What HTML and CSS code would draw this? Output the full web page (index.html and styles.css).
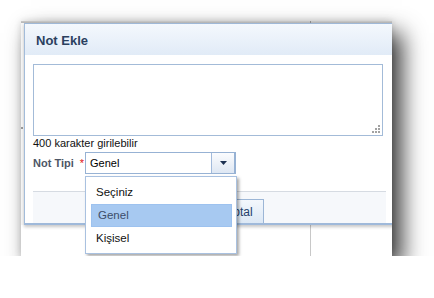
FILE: index.html
```html
<!DOCTYPE html>
<html lang="tr">
<head>
<meta charset="utf-8">
<title>Not Ekle</title>
<link rel="stylesheet" href="styles.css">
</head>
<body>
<div class="shot">
  <div class="topbar"><span class="tick"></span></div>
  <div class="stage">
    <div class="leftstrip"><span class="mark"></span></div>
    <div class="dialog">
      <div class="dlg-head">Not Ekle</div>
      <div class="dlg-body">
        <div class="textarea">
          <svg class="grip" width="8" height="8" viewBox="0 0 8 8"><rect x="6" y="0" width="2" height="2"/><rect x="3" y="3" width="2" height="2"/><rect x="6" y="3" width="2" height="2"/><rect x="0" y="6" width="2" height="2"/><rect x="3" y="6" width="2" height="2"/><rect x="6" y="6" width="2" height="2"/></svg>
        </div>
        <div class="hint">400 karakter girilebilir</div>
        <div class="field">
          <span class="label">Not Tipi</span><span class="req">*</span>
          <div class="select">
            <span class="value">Genel</span>
            <span class="sbtn"><svg width="7" height="4" viewBox="0 0 7 4"><polygon points="0,0 7,0 3.5,4"/></svg></span>
            <ul class="list">
              <li class="item">Seçiniz</li>
              <li class="item item-active">Genel</li>
              <li class="item">Kişisel</li>
            </ul>
          </div>
        </div>
        <div class="footer">
          <button class="button button-save">Kaydet</button>
          <button class="button">İptal</button>
        </div>
      </div>
    </div>
  </div>
  <div class="below"><div class="cell cell-first"></div><div class="cell"></div></div>
</div>
</body>
</html>
```

FILE: styles.css
```css
html, body {
  margin: 0;
  padding: 0;
  background: #ffffff;
}
body {
  font-family: "Liberation Sans", Arial, sans-serif;
  font-size: 11px;
  color: #111;
}
.shot {
  position: relative;
  margin: 21px 0 0 21px;
  width: 371px;
  height: 235px;
  overflow: hidden;
  background: #fff;
  box-shadow: 10px 12px 22px rgba(0, 0, 0, 0.78), 0 0 7px rgba(0, 0, 0, 0.14);
  display: flex;
  flex-direction: column;
}
.topbar {
  position: relative;
  height: 2px;
  background: linear-gradient(#c9c9c9, #b4b4b4);
  flex: none;
}
.tick {
  position: absolute;
  left: 289px;
  top: 0;
  width: 1px;
  height: 2px;
  background: #8a8a8a;
}
.stage {
  display: flex;
  flex: none;
  height: 202px;
}
.leftstrip {
  position: relative;
  width: 3px;
  flex: none;
  background: #f6f6f6;
}
.mark {
  position: absolute;
  left: 0;
  top: 104px;
  width: 2px;
  height: 2px;
  background: #9a9a9a;
}
.dialog {
  position: relative;
  z-index: 2;
  width: 380px;
  flex: none;
  border-top: 1px solid #9fb8d7;
  border-left: 1px solid #a3bcda;
  border-bottom: 2px solid #9fb9da;
  background: #fff;
  box-shadow: 0 2px 3px rgba(0, 0, 0, 0.22);
  display: flex;
  flex-direction: column;
}
.dlg-head {
  height: 28px;
  padding: 3px 0 0 11px;
  line-height: 28px;
  font-size: 13px;
  font-weight: bold;
  color: #2b405f;
  background: linear-gradient(#f4f8fd, #e1ebf7);
}
.dlg-body {
  flex: 1;
  padding: 9px 0 0 8px;
  display: flex;
  flex-direction: column;
}
.textarea {
  position: relative;
  box-sizing: border-box;
  width: 350px;
  height: 72px;
  border: 1px solid #a3bbd8;
  background: #fff;
}
.grip {
  position: absolute;
  right: 2px;
  bottom: 2px;
  fill: #a2a2a2;
}
.hint {
  margin-top: 1px;
  line-height: 13px;
  color: #111;
}
.field {
  margin-top: 2px;
  display: flex;
  align-items: center;
  height: 22px;
}
.label {
  font-weight: bold;
  color: #4e5666;
}
.req {
  margin: 0 1px 0 6px;
  color: #e01010;
  align-self: center;
}
.select {
  position: relative;
  z-index: 5;
  box-sizing: border-box;
  width: 151px;
  height: 22px;
  border: 1px solid #97b2d4;
  border-right-width: 2px;
  display: flex;
  background: #fff;
}
.value {
  flex: 1;
  padding-left: 4px;
  line-height: 20px;
  color: #000;
}
.sbtn {
  width: 22px;
  border-left: 1px solid #a2badb;
  background: linear-gradient(#fbfcfe, #dee7f3);
  display: flex;
  align-items: center;
  justify-content: center;
}
.sbtn svg {
  fill: #1d3152;
}
.list {
  position: absolute;
  left: -1px;
  top: 23px;
  box-sizing: border-box;
  width: 152px;
  margin: 0;
  padding: 4px 4px 3px 5px;
  list-style: none;
  border: 1px solid #a9c1e0;
  background: #fff;
  box-shadow: 2px 2px 3px rgba(0, 0, 0, 0.35);
}
.item {
  box-sizing: border-box;
  height: 23px;
  line-height: 23px;
  padding-left: 5px;
  font-size: 11.5px;
  color: #111;
}
.item-active {
  background: #a7c9f1;
  border: 1px solid #9dc2ef;
  line-height: 21px;
  padding-left: 6px;
  color: #3c4d6a;
}
.footer {
  margin-top: 17px;
  width: 353px;
  flex: 1;
  box-sizing: border-box;
  border-top: 1px solid #d6dbe2;
  background: #f6f8fb;
  padding: 7px 0 0 125px;
  display: flex;
  align-items: stretch;
  gap: 4px;
}
.button {
  font-family: "Liberation Sans", Arial, sans-serif;
  font-size: 12px;
  color: #24406b;
  margin: 0;
  padding: 0 10px;
  border: 1px solid #9cb6d6;
  border-bottom: none;
  background: linear-gradient(#f3f7fc, #dce8f5);
}
.button-save {
  width: 57px;
}
.below {
  flex: 1;
  display: flex;
}
.cell {
  flex: 1;
}
.cell-first {
  flex: none;
  width: 289px;
  border-right: 1px solid #c8c8c8;
}
```
